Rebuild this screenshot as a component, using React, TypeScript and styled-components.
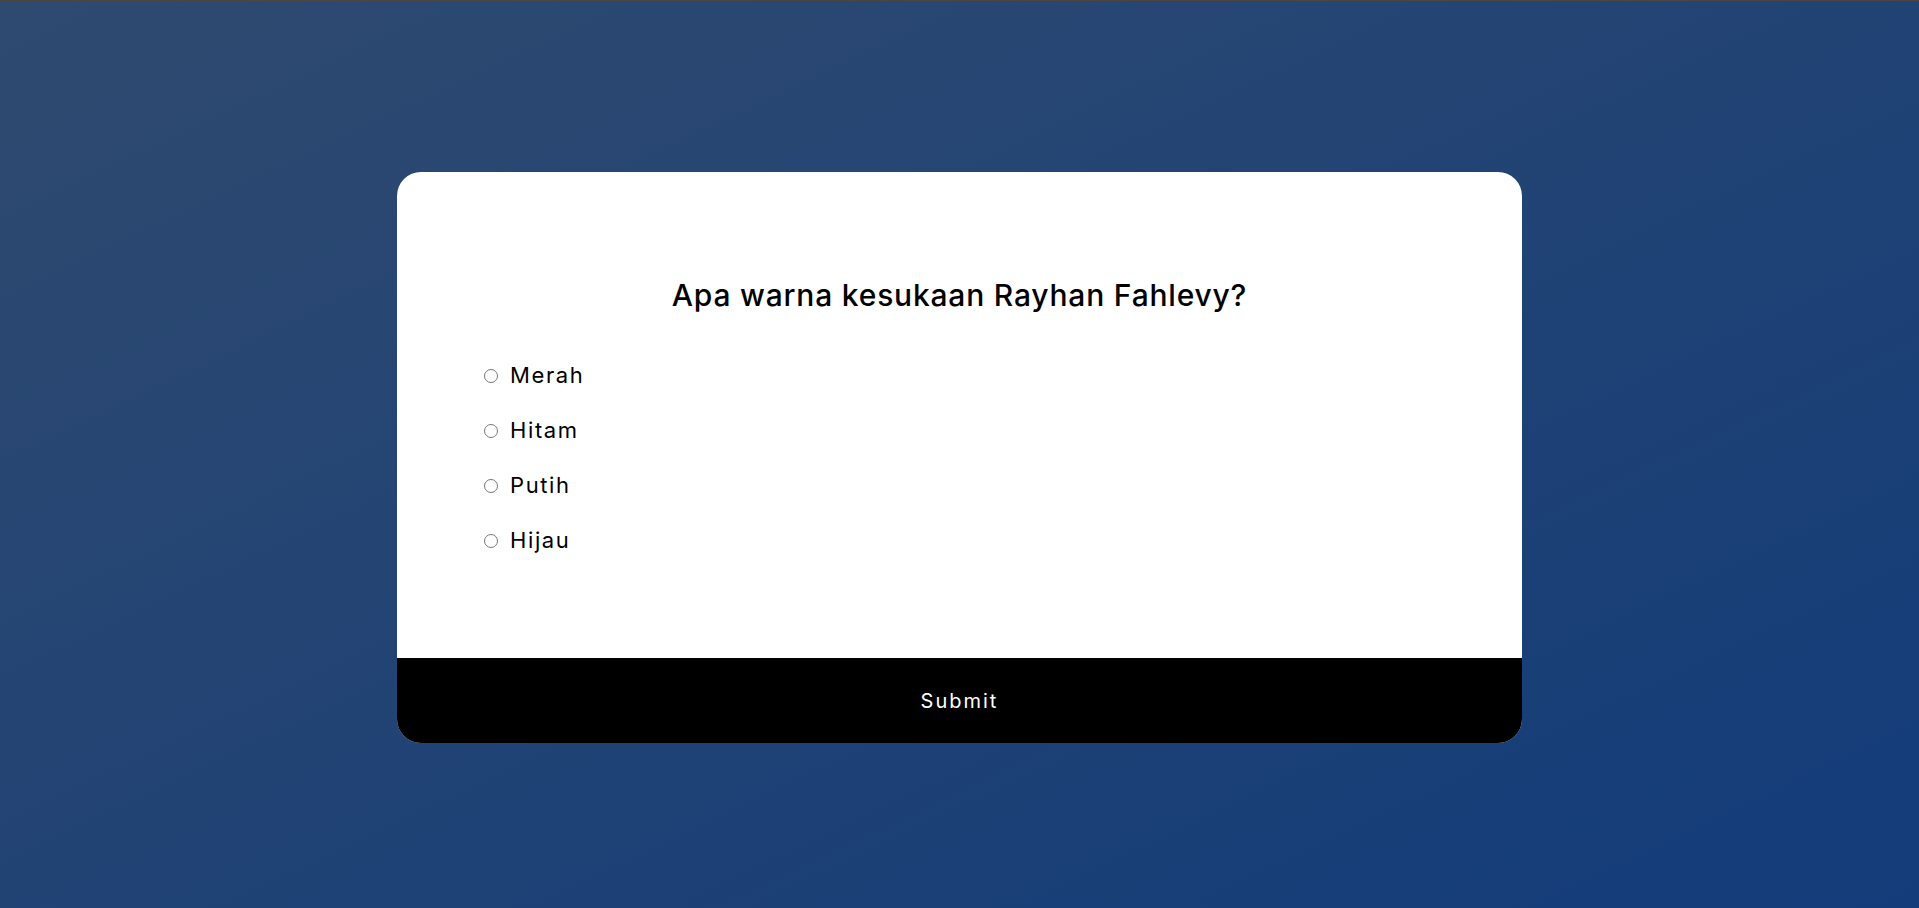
import React, { useState } from "react";
import styled, { createGlobalStyle } from "styled-components";

const GlobalStyle = createGlobalStyle`
  * { box-sizing: border-box; }
  html, body { margin: 0; padding: 0; }
  body {
    font-family: "Inter", "Open Sans", sans-serif;
    background: linear-gradient(to bottom right, #2f4a6f, #133c7a);
    min-height: 100vh;
  }
`;

const Page = styled.div`
  min-height: 908px;
  border-top: 1px solid #4a4646;
  display: flex;
  align-items: center;
  justify-content: center;
  padding-top: 6px;
`;

const Card = styled.div`
  width: 1125px;
  background: #ffffff;
  border-radius: 24px;
  overflow: hidden;
  display: flex;
  flex-direction: column;
`;

const Body = styled.div`
  padding: 105px 87px 105px;
  display: flex;
  flex-direction: column;
`;

const Question = styled.h2`
  margin: 0 0 50px;
  text-align: center;
  font-size: 30px;
  font-weight: 500;
  letter-spacing: 0.8px;
  color: #000;
  line-height: 36px;
`;

const Options = styled.ul`
  list-style: none;
  margin: 0;
  padding: 0;
  display: flex;
  flex-direction: column;
  gap: 30px;
`;

const Option = styled.li`
  display: flex;
  align-items: center;
  gap: 12px;
  height: 25px;
`;

const Radio = styled.input`
  margin: 0;
  width: 14px;
  height: 14px;
`;

const Label = styled.label`
  font-size: 22px;
  letter-spacing: 1.6px;
  color: #000;
  line-height: 25px;
`;

const Submit = styled.button`
  display: block;
  width: 100%;
  height: 85px;
  border: none;
  background: #000;
  color: #fff;
  font-family: "Inter", "Open Sans", sans-serif;
  font-size: 20px;
  letter-spacing: 2px;
  cursor: pointer;
`;

const answers = ["Merah", "Hitam", "Putih", "Hijau"];

export default function App() {
  const [choice, setChoice] = useState<string | null>(null);
  return (
    <>
      <GlobalStyle />
      <Page>
        <Card>
          <Body>
            <Question>Apa warna kesukaan Rayhan Fahlevy?</Question>
            <Options>
              {answers.map((a) => (
                <Option key={a}>
                  <Radio
                    type="radio"
                    name="answer"
                    id={a}
                    checked={choice === a}
                    onChange={() => setChoice(a)}
                  />
                  <Label htmlFor={a}>{a}</Label>
                </Option>
              ))}
            </Options>
          </Body>
          <Submit>Submit</Submit>
        </Card>
      </Page>
    </>
  );
}
